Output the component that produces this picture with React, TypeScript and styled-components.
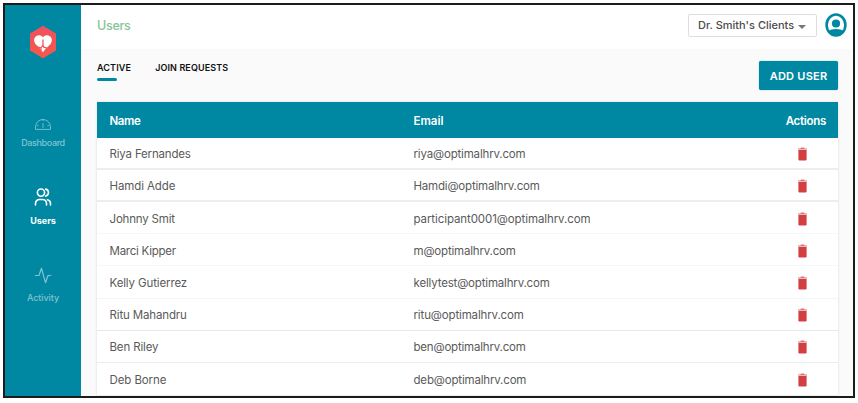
import React from "react";
import styled, { createGlobalStyle } from "styled-components";

const teal = "#0088a3";

const GlobalStyle = createGlobalStyle`
  * { box-sizing: border-box; }
  body { margin: 0; background: #fff; font-family: Inter, "Open Sans", sans-serif; }
`;

const Page = styled.div`
  width: 858px;
  height: 403px;
  padding: 3px 3px 5px;
  overflow: hidden;
`;

const Frame = styled.div`
  display: flex;
  width: 852px;
  height: 395px;
  border: 2px solid #1c1c1c;
  overflow: hidden;
`;

const Sidebar = styled.nav`
  display: flex;
  flex-direction: column;
  align-items: center;
  flex: 0 0 76px;
  background: ${teal};
`;

const Logo = styled.svg`
  display: block;
  flex: none;
  width: 28px;
  height: 34px;
  margin-top: 20px;
  margin-bottom: 51px;
`;

const NavItem = styled.a<{ $active?: boolean }>`
  display: flex;
  flex-direction: column;
  align-items: center;
  flex: 0 0 77.5px;
  color: ${(p) => (p.$active ? "#fff" : "#80c3d1")};
  font-size: 9px;
  font-weight: ${(p) => (p.$active ? 700 : 500)};
  line-height: 12px;
`;

const NavIcon = styled.svg`
  display: block;
  width: 18px;
  height: 18px;
  margin-bottom: 9px;
  overflow: visible;
  fill: none;
  stroke: currentColor;
  stroke-linecap: round;
  stroke-linejoin: round;
`;

const Label = styled.span<{ $track?: number }>`
  letter-spacing: ${(p) => p.$track ?? 0}px;
  white-space: nowrap;
`;

const Main = styled.main`
  flex: 1;
  min-width: 0;
  background: #fafafa;
`;

const Header = styled.header`
  display: flex;
  align-items: flex-start;
  height: 44px;
  padding: 9px 6px 0 16px;
  background: #fff;
`;

const Title = styled.h1`
  flex: 1;
  margin: 3px 0 0;
  color: #84c597;
  font-size: 12.5px;
  font-weight: 500;
  line-height: 18px;
`;

const ClientSelect = styled.button`
  display: flex;
  align-items: center;
  justify-content: space-between;
  width: 129px;
  height: 23px;
  margin-right: 8px;
  padding: 0 10px 1px 9px;
  border: 1px solid #dedede;
  border-radius: 2px;
  background: #fff;
  color: #4c4c4c;
  font: 500 11px Inter, sans-serif;
`;

const Caret = styled.span`
  border: solid transparent;
  border-width: 4px 4px 0;
  border-top-color: #777;
  margin-top: 3px;
`;

const Avatar = styled.svg`
  display: block;
  width: 22px;
  height: 24px;
  margin-top: -1px;
`;

const Toolbar = styled.div`
  display: flex;
  align-items: flex-start;
  height: 53px;
  padding: 12px 15px 0 16px;
`;

const Tab = styled.div<{ $active?: boolean }>`
  margin-right: 24px;
  color: #111;
  font-size: 9px;
  font-weight: 600;
  line-height: 13px;

  &::after {
    content: "";
    display: block;
    width: 20px;
    height: 3px;
    margin-top: 4px;
    border-radius: 2px;
    background: ${(p) => (p.$active ? teal : "transparent")};
  }
`;

const AddButton = styled.button`
  width: 79px;
  height: 29px;
  margin-left: auto;
  padding: 0;
  border: 0;
  border-radius: 2px;
  background: ${teal};
  box-shadow: 0 0 1px #0088a3;
  color: #fff;
  font: 600 11px Inter, sans-serif;
`;

const Table = styled.section`
  width: 741px;
  margin-left: 16px;
  background: #fff;
  box-shadow: 0 0 2px #d5d5d5;
`;

const row = `
  display: grid;
  grid-template-columns: 304px 1fr 70px;
  align-items: center;
  padding-left: 12.5px;
`;

const HeadRow = styled.div`
  ${row}
  height: 35.6px;
  padding-top: 2px;
  background: ${teal};
  color: #fff;
  font-size: 11.5px;
  font-weight: 600;
`;

const Row = styled.div<{ $line: string; $thick?: boolean }>`
  ${row}
  height: 32.2px;
  padding-top: ${(p) => (p.$thick ? 3 : 2)}px;
  border-bottom: ${(p) => (p.$thick ? 2 : 1)}px solid ${(p) => p.$line};
  color: #5a5a5a;
  font-size: 11.5px;
  line-height: 16px;
`;

const ActionCell = styled.span`
  display: flex;
  justify-content: flex-end;
  padding-right: 12px;
`;

const DeleteCell = styled(ActionCell)`
  padding-right: 31px;
`;

const Trash = styled.svg`
  display: block;
  width: 9px;
  height: 14px;
`;

interface User {
  name: string;
  email: string;
  nameTrack: number;
  emailTrack: number;
  line: string;
  thick?: boolean;
}

const users: User[] = [
  { name: "Riya Fernandes", email: "riya@optimalhrv.com", nameTrack: -0.18, emailTrack: -0.17, line: "#eee", thick: true },
  { name: "Hamdi Adde", email: "Hamdi@optimalhrv.com", nameTrack: -0.1, emailTrack: -0.19, line: "#eee", thick: true },
  { name: "Johnny Smit", email: "participant0001@optimalhrv.com", nameTrack: -0.18, emailTrack: -0.09, line: "#f7f7f7" },
  { name: "Marci Kipper", email: "m@optimalhrv.com", nameTrack: -0.25, emailTrack: -0.18, line: "#f7f7f7" },
  { name: "Kelly Gutierrez", email: "kellytest@optimalhrv.com", nameTrack: -0.13, emailTrack: -0.17, line: "#f5f5f5" },
  { name: "Ritu Mahandru", email: "ritu@optimalhrv.com", nameTrack: -0.15, emailTrack: -0.14, line: "#e8e8e8" },
  { name: "Ben Riley", email: "ben@optimalhrv.com", nameTrack: -0.15, emailTrack: -0.19, line: "#ececec" },
  { name: "Deb Borne", email: "deb@optimalhrv.com", nameTrack: -0.1, emailTrack: -0.17, line: "#fff" },
];

export default function App() {
  return (
    <Page>
      <GlobalStyle />
      <Frame>
        <Sidebar>
          <Logo viewBox="0 0 28 34">
            <defs>
              <linearGradient id="logoFill" x1="0" y1="0" x2="0" y2="1">
                <stop offset="0" stopColor="#f0505f" />
                <stop offset="1" stopColor="#f4594b" />
              </linearGradient>
            </defs>
            <path d="M14 .8 27 8.5v17L14 33.2 1 25.5v-17z" fill="url(#logoFill)" />
            <path d="M14 12.2c-1.6-2.6-5.6-2.7-7.6-.5-2.1 2.4-1.3 5.8.5 7.8l3.4 3.2 3.7 4.6 2-2.8 5.1-5c1.8-2 2.6-5.4.5-7.8-2-2.2-6-2.1-7.6.5z" fill="#fff" />
            <path d="M14 14.5v5.7l-1.7 2.2M14 20.2l.8 2 3.2.9M8.8 22.2l3 .5.4 2.4" fill="none" stroke="#f2565a" strokeWidth="1.3" />
          </Logo>
          <NavItem>
            <NavIcon viewBox="0 0 18 18" strokeWidth=".9">
              <path d="M1.5 19v-2a7.5 7.5 0 0 1 15 0v2zM9 13.5v4M9 9.5v1M3.5 15.5l.7.2M14.5 15.5l-.7.2" />
            </NavIcon>
            <Label $track={-0.38}>Dashboard</Label>
          </NavItem>
          <NavItem $active>
            <NavIcon viewBox="0 0 18 18" strokeWidth="1.6">
              <circle cx="7" cy="4.6" r="3.6" />
              <path d="M1.5 17v-1.5a4 4 0 0 1 4-4h3a4 4 0 0 1 4 4V17M11.7 1.1a3.6 3.6 0 0 1 0 7M13.5 11.7a4 4 0 0 1 3 3.8V17" />
            </NavIcon>
            <Label>Users</Label>
          </NavItem>
          <NavItem>
            <NavIcon viewBox="0 0 18 18" strokeWidth="1.2">
              <path d="M1.4 10.5H5l2.5-7.2 4 14.4 2.5-7.2h2.8" />
            </NavIcon>
            <Label $track={-0.08}>Activity</Label>
          </NavItem>
        </Sidebar>
        <Main>
          <Header>
            <Title><Label $track={-0.3}>Users</Label></Title>
            <ClientSelect><Label>Dr. Smith's Clients</Label><Caret /></ClientSelect>
            <Avatar viewBox="0 0 22 24" preserveAspectRatio="none">
              <ellipse cx="11" cy="12" rx="9.4" ry="10.5" fill="#fff" stroke={teal} strokeWidth="2.6" />
              <circle cx="11" cy="10.5" r="4.1" fill={teal} />
              <path d="M3 18.4c3.8-3.1 12.2-3.1 16 0-3.5 6-12.5 6-16 0z" fill={teal} />
            </Avatar>
          </Header>
          <Toolbar>
            <Tab $active><Label $track={0.15}>ACTIVE</Label></Tab>
            <Tab><Label $track={0.1}>JOIN REQUESTS</Label></Tab>
            <AddButton><Label $track={0.25}>ADD USER</Label></AddButton>
          </Toolbar>
          <Table>
            <HeadRow>
              <span><Label $track={-0.4}>Name</Label></span>
              <span><Label>Email</Label></span>
              <ActionCell><Label $track={-0.28}>Actions</Label></ActionCell>
            </HeadRow>
            {users.map((u) => (
              <Row key={u.email} $line={u.line} $thick={u.thick}>
                <span><Label $track={u.nameTrack}>{u.name}</Label></span>
                <span><Label $track={u.emailTrack}>{u.email}</Label></span>
                <DeleteCell>
                  <Trash viewBox="0 0 9 14">
                    <path d="M0 1.4h2.4L3 .6h3l.6.8H9v1.2H0z" fill="#dc7478" />
                    <path d="M.4 3h8.2v9.3q0 1.2-1.2 1.2H1.6Q.4 13.5.4 12.3z" fill="#d04040" />
                  </Trash>
                </DeleteCell>
              </Row>
            ))}
          </Table>
        </Main>
      </Frame>
    </Page>
  );
}
